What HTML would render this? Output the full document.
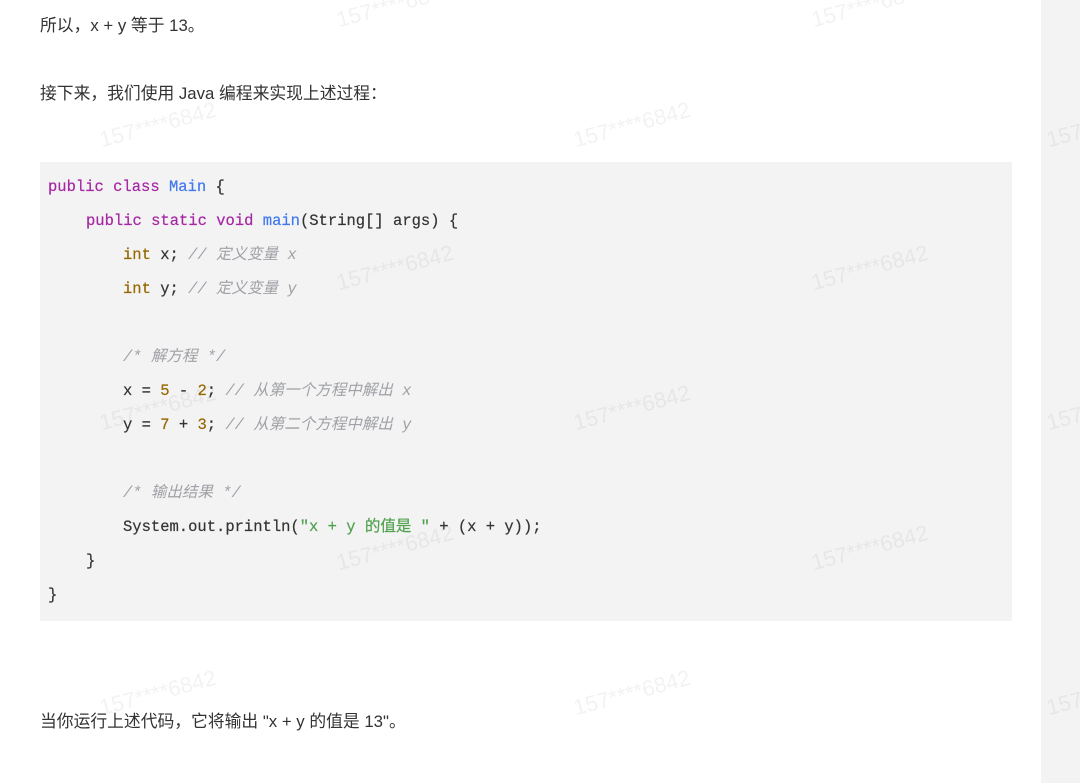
<!DOCTYPE html>
<html><head><meta charset="utf-8"><style>
html,body{margin:0;padding:0;width:1080px;height:783px;overflow:hidden;background:#fff;position:relative}
.side{position:absolute;left:1041px;top:0;width:39px;height:783px;background:#f3f3f3}
.p{position:absolute;left:40px;font:16.8px "Liberation Sans","Noto Sans CJK SC",sans-serif;color:#333;line-height:24px;white-space:nowrap}
.code{position:absolute;left:40px;top:162px;width:972px;height:459px;background:#f3f3f3}
.l{position:absolute;left:8px;font:15.5px "Liberation Mono","Noto Sans CJK SC",monospace;color:#333;line-height:20px;white-space:pre;-webkit-text-stroke:0.2px currentColor}
.k{color:#a626a4}.f{color:#4078f2}.t{color:#986801}.c{color:#a0a1a7;font-style:italic;-webkit-text-stroke:0}.s{color:#50a14f}.n{color:#986801}
.w{position:absolute;font:22px "Liberation Sans",sans-serif;color:rgba(0,0,0,0.05);transform:rotate(-15deg);white-space:nowrap}
</style></head><body>
<div class="side"></div>
<div class="p" style="top:14px">所以，x + y 等于 13。</div>
<div class="p" style="top:82px">接下来，我们使用 Java 编程来实现上述过程：</div>
<div class="code">
<div class="l" style="top:15px"><span class="k">public</span> <span class="k">class</span> <span class="f">Main</span> {</div>
<div class="l" style="top:49px;left:46px"><span class="k">public</span> <span class="k">static</span> <span class="k">void</span> <span class="f">main</span>(String[] args) {</div>
<div class="l" style="top:83px;left:83px"><span class="t">int</span> x; <span class="c">// 定义变量 x</span></div>
<div class="l" style="top:117px;left:83px"><span class="t">int</span> y; <span class="c">// 定义变量 y</span></div>
<div class="l" style="top:185px;left:83px"><span class="c">/* 解方程 */</span></div>
<div class="l" style="top:219px;left:83px">x = <span class="n">5</span> - <span class="n">2</span>; <span class="c">// 从第一个方程中解出 x</span></div>
<div class="l" style="top:253px;left:83px">y = <span class="n">7</span> + <span class="n">3</span>; <span class="c">// 从第二个方程中解出 y</span></div>
<div class="l" style="top:321px;left:83px"><span class="c">/* 输出结果 */</span></div>
<div class="l" style="top:355px;left:83px">System.out.println(<span class="s">"x + y 的值是 "</span> + (x + y));</div>
<div class="l" style="top:389px;left:46px">}</div>
<div class="l" style="top:423px">}</div>
</div>
<div class="p" style="top:710px">当你运行上述代码，它将输出 "x + y 的值是 13"。</div>
<div class="w" style="left:335px;top:-8px">157****6842</div>
<div class="w" style="left:810px;top:-8px">157****6842</div>
<div class="w" style="left:98px;top:112px">157****6842</div>
<div class="w" style="left:572px;top:112px">157****6842</div>
<div class="w" style="left:1045px;top:112px">157****6842</div>
<div class="w" style="left:335px;top:255px">157****6842</div>
<div class="w" style="left:810px;top:255px">157****6842</div>
<div class="w" style="left:98px;top:395px">157****6842</div>
<div class="w" style="left:572px;top:395px">157****6842</div>
<div class="w" style="left:1045px;top:395px">157****6842</div>
<div class="w" style="left:335px;top:535px">157****6842</div>
<div class="w" style="left:810px;top:535px">157****6842</div>
<div class="w" style="left:98px;top:680px">157****6842</div>
<div class="w" style="left:572px;top:680px">157****6842</div>
<div class="w" style="left:1045px;top:680px">157****6842</div>
</body></html>
